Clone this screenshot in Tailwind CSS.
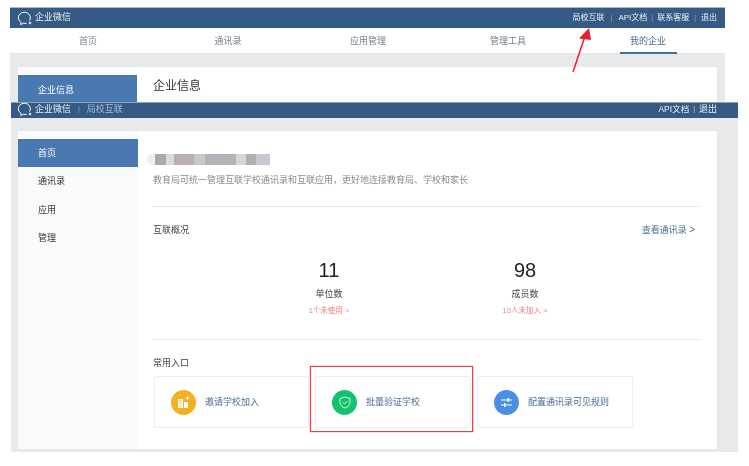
<!DOCTYPE html>
<html lang="zh">
<head>
<meta charset="utf-8">
<script src="https://cdn.jsdelivr.net/npm/@tailwindcss/browser@4"></script>
</head>
<body class="bg-white">
<div class="relative w-[749px] h-[466px] overflow-hidden bg-white font-['Liberation_Sans','Noto_Sans_CJK_SC',sans-serif] blur-[0.4px]">

  <!-- first screenshot -->
  <div class="ml-[10px] mt-[7px] w-[715px] h-[95px] overflow-hidden bg-[#e8e9eb]">
    <div class="h-[21px] bg-[#345a85] border-t border-[#a9b7c8] flex items-center pl-[7px] pr-[8px] text-white/90 text-[8px]">
      <svg width="17" height="15" viewBox="0 0 17 15" fill="none" stroke="#fff" stroke-width="1"><path d="M12.500 9.500A6 5.500 0 1 0 4 11.300L3.800 13.500 6.500 12.200Q8 12.600 9.500 12.300"/><circle cx="13" cy="12" r="0.900"/></svg>
      <span class="ml-[1px] text-[9px]">企业微信</span>
      <div class="ml-auto flex items-center">
        <span>局校互联</span><span class="mx-[6px] text-white/40 text-[7px]">|</span>
        <span>API文档</span><span class="mx-[4px] text-white/40 text-[7px]">|</span>
        <span>联系客服</span><span class="mx-[5px] text-white/40 text-[7px]">|</span>
        <span>退出</span>
      </div>
    </div>
    <div class="h-[26px] bg-white pl-[8px] w-full border-b border-[#e2e4e8]">
      <div class="w-[700px] grid grid-cols-5 text-[9px] text-[#73808e] h-[25px]">
        <div class="flex items-center justify-center pt-[2px]">首页</div>
        <div class="flex items-center justify-center pt-[2px]">通讯录</div>
        <div class="flex items-center justify-center pt-[2px]">应用管理</div>
        <div class="flex items-center justify-center pt-[2px]">管理工具</div>
        <div class="flex justify-center">
          <div class="w-[57px] h-[26px] border-b-2 border-[#4a6d94] flex items-center justify-center pt-[3px] text-[#4a6d94]">我的企业</div>
        </div>
      </div>
    </div>
    <div class="ml-[8px] mt-[13px] w-[699px] h-[60px] bg-white rounded-t-[2px] flex">
      <div class="w-[119px] bg-[#f8fafc] pt-[8px]">
        <div class="h-[32px] bg-[#4a78b0] flex items-center pl-[20px] text-[9px] text-white">企业信息</div>
      </div>
      <div class="pl-[16px] pt-[11px] text-[12px] leading-[16px] text-[#333]">企业信息</div>
    </div>
  </div>

  <!-- second screenshot -->
  <div class="ml-[11px] w-[727px] h-[350px] bg-[#e8e9eb]">
    <div class="h-[16px] bg-[#345a85] border-t border-[#8ea2b9] flex items-center pl-[6px] pr-[21px] pb-[2px] text-[9px] text-white/90">
      <svg width="17" height="15" viewBox="0 0 17 15" fill="none" stroke="#fff" stroke-width="1"><path d="M12.500 9.500A6 5.500 0 1 0 4 11.300L3.800 13.500 6.500 12.200Q8 12.600 9.500 12.300"/><circle cx="13" cy="12" r="0.900"/></svg>
      <span class="ml-[1px]">企业微信</span>
      <span class="mx-[7px] text-white/40 text-[7px]">|</span>
      <span class="text-[#a9bcd2]">局校互联</span>
      <div class="ml-auto flex items-center">
        <span class="text-[8.500px]">API文档</span><span class="mx-[4px] text-white/70 text-[7px]">|</span><span>退出</span>
      </div>
    </div>
    <div class="ml-[7px] mt-[13px] w-[699px] h-[318px] bg-white rounded-t-[2px] flex">
      <div class="w-[120px] shrink-0 bg-[#f8fafc] pt-[8px] text-[9px] text-[#333]">
        <div class="h-[28px] bg-[#4a78b0] flex items-center pl-[20px] pt-[1px] text-white">首页</div>
        <div class="h-[29px] flex items-center pl-[20px]">通讯录</div>
        <div class="h-[29px] flex items-center pl-[20px]">应用</div>
        <div class="h-[28px] flex items-center pl-[20px]">管理</div>
      </div>
      <div class="pl-[15px] w-[562px]">
        <div class="mt-[23px] -ml-[6px] h-[11px] w-[123px] flex blur-[0.6px]">
          <div class="w-[8px] bg-[#eeeeea] rounded-l-full"></div>
          <div class="w-[11px] bg-[#a9a9af]"></div>
          <div class="w-[8px] bg-[#dadbdb]"></div>
          <div class="w-[20px] bg-[#b9b1b1]"></div>
          <div class="w-[11px] bg-[#c8c8ca]"></div>
          <div class="w-[31px] bg-[#b2b2b8]"></div>
          <div class="w-[10px] bg-[#d5d7d7]"></div>
          <div class="w-[10px] bg-[#b6aeab]"></div>
          <div class="w-[14px] bg-[#c6cad0]"></div>
        </div>
        <div class="mt-[9px] h-[12px] leading-[12px] text-[9px] text-[#8a8a8a] whitespace-nowrap">教育局可统一管理互联学校通讯录和互联应用，更好地连接教育局、学校和家长</div>
        <div class="mt-[20px] h-px bg-[#e8e8e8]"></div>
        <div class="mt-[17px] h-[12px] leading-[12px] flex justify-between text-[9px] text-[#444]">
          <span>互联概况</span>
          <span class="text-[#4a6d94] pr-[5px]">查看通讯录 <span class="text-[10px]">&gt;</span></span>
        </div>
        <div class="mt-[22px] ml-[78px] flex w-[392px] text-center">
          <div class="w-[196px]">
            <div class="h-[24px] leading-[24px] text-[20px] text-[#222]">11</div>
            <div class="mt-[6px] h-[12px] leading-[12px] text-[9px] text-[#444]">单位数</div>
            <div class="mt-[6px] h-[10px] leading-[10px] text-[7.500px] text-[#f57b80]">1个未使用 &gt;</div>
          </div>
          <div class="w-[196px]">
            <div class="h-[24px] leading-[24px] text-[20px] text-[#222]">98</div>
            <div class="mt-[6px] h-[12px] leading-[12px] text-[9px] text-[#444]">成员数</div>
            <div class="mt-[6px] h-[10px] leading-[10px] text-[7.500px] text-[#f57b80]">10人未加入 &gt;</div>
          </div>
        </div>
        <div class="mt-[23px] h-px bg-[#e8e8e8]"></div>
        <div class="mt-[17px] h-[12px] leading-[12px] text-[9px] text-[#444]">常用入口</div>
        <div class="mt-[7px] ml-[1px] flex gap-[6px] text-[9px] text-[#4a6d94]">
          <div class="w-[155px] h-[52px] bg-white border border-[#eceef2] rounded-[2px] flex items-center pl-[16px]">
            <div class="w-[25px] h-[25px] rounded-full bg-[#f5b021] flex items-center justify-center">
              <svg width="13" height="13" viewBox="0 0 13 13" fill="#fff"><path d="M1 3h5v9H1zM7 6h4v6H7z"/><path d="M10.500 0v4M8.500 2h4" stroke="#fff" stroke-width="1"/><path d="M2.500 5h2M2.500 7.500h2M2.500 10h2" stroke="#f5b021" stroke-width="1"/></svg>
            </div>
            <span class="ml-[9px] pt-[2px]">邀请学校加入</span>
          </div>
          <div class="w-[156px] h-[52px] bg-white border border-[#eceef2] rounded-[2px] flex items-center pl-[16px]">
            <div class="w-[25px] h-[25px] rounded-full bg-[#13c16f] flex items-center justify-center">
              <svg width="12" height="13" viewBox="0 0 12 13" fill="none" stroke="#d5f5e5" stroke-width="1"><path d="M6 1l5 1.500v4c0 3-2.500 4.800-5 5.500-2.500-.7-5-2.500-5-5.500v-4z"/><path d="M3.800 6.300l1.700 1.700 3-3"/></svg>
            </div>
            <span class="ml-[9px] pt-[2px]">批量验证学校</span>
          </div>
          <div class="w-[156px] h-[52px] bg-white border border-[#eceef2] rounded-[2px] flex items-center pl-[16px]">
            <div class="w-[25px] h-[25px] rounded-full bg-[#4a8fe0] flex items-center justify-center">
              <svg width="13" height="11" viewBox="0 0 13 11" fill="#fff"><path d="M1 2.500h11v1H1zM1 7.500h11v1H1z"/><path d="M7.500 1h1.500v4H7.500zM4 6h1.500v4H4z"/></svg>
            </div>
            <span class="ml-[9px] pt-[2px]">配置通讯录可见规则</span>
          </div>
        </div>
      </div>
    </div>
  </div>

  <!-- annotations -->
  <div class="absolute left-[310px] top-[366px] w-[163px] h-[66px] border border-[#ee3b44] shadow-[0_0_1px_#ee3b44]"></div>
  <svg class="absolute left-[565px] top-[22px]" width="32" height="54" viewBox="0 0 32 54" fill="none">
    <path d="M8 50L20 14" stroke="#ee1c2b" stroke-width="1.500"/>
    <path d="M24 6L14 16.500 26 18z" fill="#ee1c2b"/>
  </svg>
</div>
</body>
</html>
